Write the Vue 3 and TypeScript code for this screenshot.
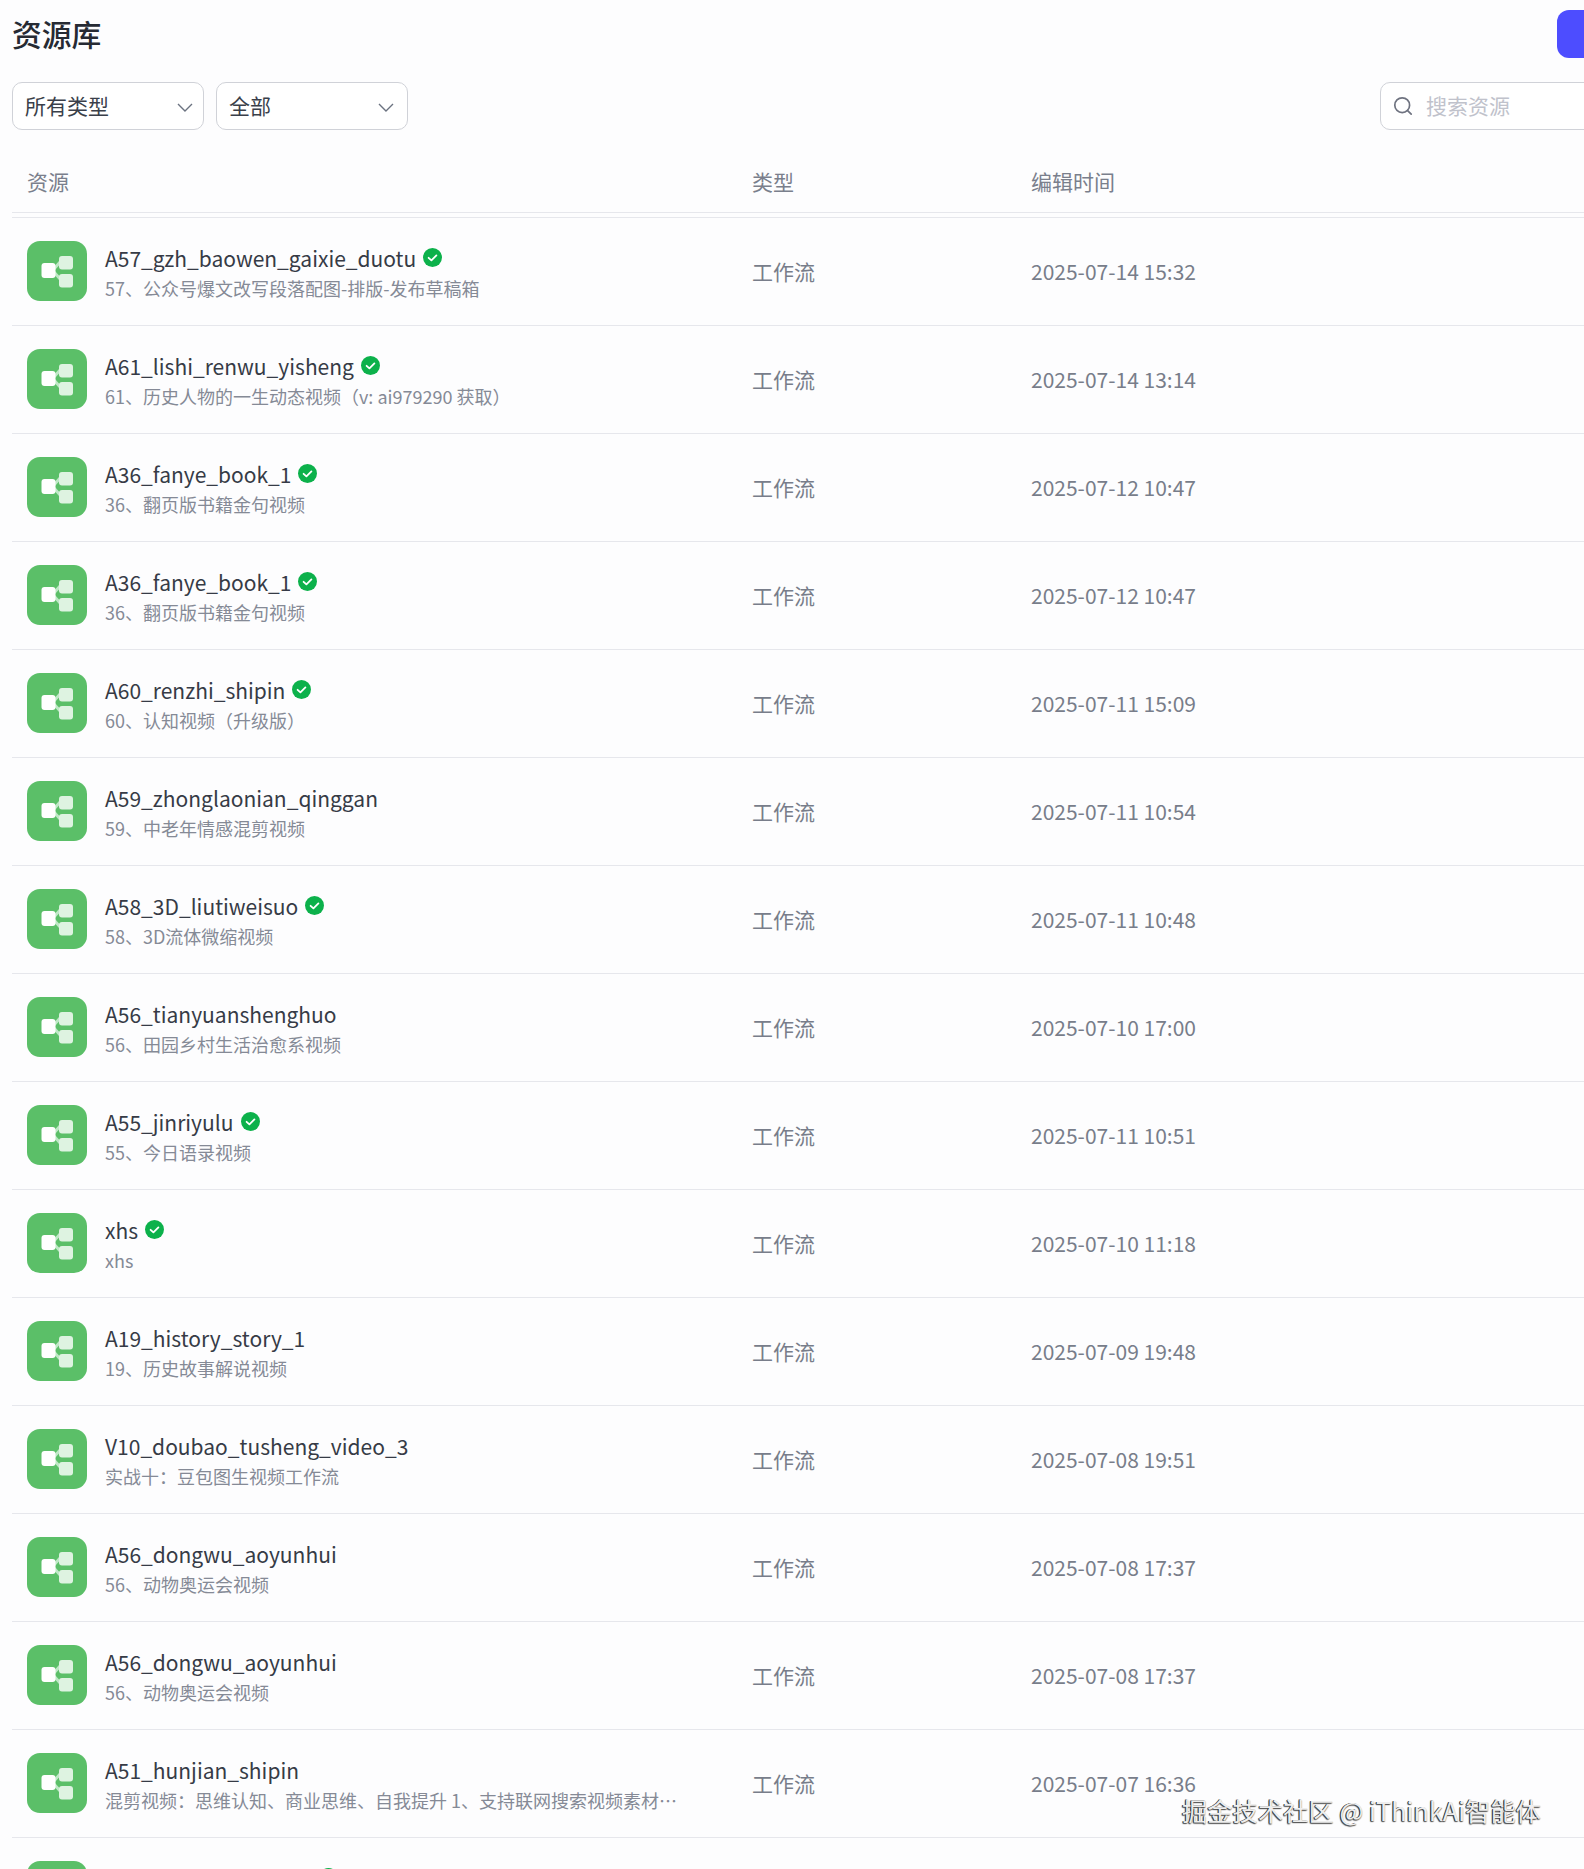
<script setup lang="ts">
interface Resource {
  name: string
  desc: string
  time: string
  verified: boolean
}

const resources: Resource[] = [
  { name: "A57_gzh_baowen_gaixie_duotu", desc: "57、公众号爆文改写段落配图-排版-发布草稿箱", time: "2025-07-14 15:32", verified: true },
  { name: "A61_lishi_renwu_yisheng", desc: "61、历史人物的一生动态视频（v: ai979290 获取）", time: "2025-07-14 13:14", verified: true },
  { name: "A36_fanye_book_1", desc: "36、翻页版书籍金句视频", time: "2025-07-12 10:47", verified: true },
  { name: "A36_fanye_book_1", desc: "36、翻页版书籍金句视频", time: "2025-07-12 10:47", verified: true },
  { name: "A60_renzhi_shipin", desc: "60、认知视频（升级版）", time: "2025-07-11 15:09", verified: true },
  { name: "A59_zhonglaonian_qinggan", desc: "59、中老年情感混剪视频", time: "2025-07-11 10:54", verified: false },
  { name: "A58_3D_liutiweisuo", desc: "58、3D流体微缩视频", time: "2025-07-11 10:48", verified: true },
  { name: "A56_tianyuanshenghuo", desc: "56、田园乡村生活治愈系视频", time: "2025-07-10 17:00", verified: false },
  { name: "A55_jinriyulu", desc: "55、今日语录视频", time: "2025-07-11 10:51", verified: true },
  { name: "xhs", desc: "xhs", time: "2025-07-10 11:18", verified: true },
  { name: "A19_history_story_1", desc: "19、历史故事解说视频", time: "2025-07-09 19:48", verified: false },
  { name: "V10_doubao_tusheng_video_3", desc: "实战十：豆包图生视频工作流", time: "2025-07-08 19:51", verified: false },
  { name: "A56_dongwu_aoyunhui", desc: "56、动物奥运会视频", time: "2025-07-08 17:37", verified: false },
  { name: "A56_dongwu_aoyunhui", desc: "56、动物奥运会视频", time: "2025-07-08 17:37", verified: false },
  { name: "A51_hunjian_shipin", desc: "混剪视频：思维认知、商业思维、自我提升 1、支持联网搜索视频素材并自动生成", time: "2025-07-07 16:36", verified: false },
  { name: "A54_shiwu_jiaoliu_vi", desc: "54、视频", time: "2025-07-07 11:20", verified: true },
]
</script>

<template>
  <div class="page">
    <header class="top">
      <h1>资源库</h1>
      <button class="primary" type="button" aria-label="创建资源"></button>
    </header>

    <div class="filters">
      <div class="select">
        <span>所有类型</span>
        <svg width="16" height="16" viewBox="0 0 16 16" fill="none" stroke="#6b7280" stroke-width="1.4">
          <path d="M1 7l7 7 7-7" />
        </svg>
      </div>
      <div class="select second">
        <span>全部</span>
        <svg width="16" height="16" viewBox="0 0 16 16" fill="none" stroke="#6b7280" stroke-width="1.4">
          <path d="M1 7l7 7 7-7" />
        </svg>
      </div>
      <div class="search">
        <svg width="20" height="20" viewBox="0 0 20 20" fill="none" stroke="#6f7380" stroke-width="1.7">
          <circle cx="9.2" cy="9.2" r="7.4" />
          <path d="M14.6 14.6l3.6 3.6" stroke-linecap="round" />
        </svg>
        <span>搜索资源</span>
      </div>
    </div>

    <div class="table-head grid">
      <span>资源</span>
      <span>类型</span>
      <span>编辑时间</span>
    </div>

    <ul class="list">
      <li v-for="(item, i) in resources" :key="i" class="row grid">
        <div class="res">
          <svg class="res-icon" width="60" height="60" viewBox="0 0 60 60">
            <rect width="60" height="60" rx="13" fill="#5bbf68" />
            <path d="M26 29l8-9M26 30l8 9" stroke="#bfe8c6" stroke-width="3" fill="none" />
            <rect x="32" y="15" width="14" height="13.5" rx="3" fill="#def3e1" />
            <rect x="32" y="33" width="14" height="13.5" rx="3" fill="#def3e1" />
            <rect x="14.5" y="22" width="14" height="15" rx="3" fill="#fff" />
          </svg>
          <div class="res-text">
            <div class="res-name">
              <span>{{ item.name }}</span>
              <svg v-if="item.verified" class="badge" width="19" height="19" viewBox="0 0 19 19">
                <circle cx="9.5" cy="9.5" r="9.5" fill="#0cb14b" />
                <path d="M5.6 9.8l2.8 2.6 5-5" fill="none" stroke="#fff" stroke-width="1.8" stroke-linecap="round" stroke-linejoin="round" />
              </svg>
            </div>
            <div class="res-desc">{{ item.desc }}</div>
          </div>
        </div>
        <span class="cell">工作流</span>
        <span class="cell">{{ item.time }}</span>
      </li>
    </ul>

    <div class="watermark">掘金技术社区 @ iThinkAi智能体</div>
  </div>
</template>

<style>
html,
body {
  margin: 0;
  height: 1869px;
  overflow: hidden;
  background: #fdfdfe;
}
</style>

<style scoped>
.page {
  position: relative;
  box-sizing: border-box;
  width: 1670px;
  height: 1869px;
  overflow: hidden;
  padding: 10px 0 0 12px;
  font-family: "Noto Sans CJK SC", "Noto Sans", sans-serif;
  font-size: 21px;
  color: #1f2329;
}

.top {
  display: flex;
  align-items: center;
  justify-content: space-between;
  height: 48px;
}

h1 {
  margin: 0;
  padding-bottom: 2px;
  font-size: 29.8px;
  font-weight: 500;
  line-height: 46px;
  color: #262a33;
}

.primary {
  width: 113px;
  height: 48px;
  border: 0;
  border-radius: 12px 0 0 12px;
  background: #4d4dff;
}

.filters {
  display: flex;
  gap: 12px;
  margin-top: 24px;
}

.select,
.search {
  box-sizing: border-box;
  display: flex;
  align-items: center;
  height: 48px;
  padding-bottom: 2px;
  border: 1px solid #d0d2d8;
  border-radius: 10px;
  background: #fff;
}

.select {
  justify-content: space-between;
  width: 192px;
  padding-left: 12px;
  padding-right: 10px;
  color: #3a3f4a;
}

.select.second {
  padding-right: 13px;
}

.search {
  width: 290px;
  gap: 13px;
  margin-left: auto;
  padding-left: 12px;
  padding-right: 12px;
  color: #c0c2cb;
}

.search svg {
  margin-top: 2px;
}

.grid {
  display: grid;
  grid-template-columns: 725px 279px 1fr;
  align-items: center;
  padding-left: 15px;
}

.table-head {
  box-sizing: border-box;
  height: 59px;
  margin-top: 24px;
  padding-bottom: 4px;
  border-bottom: 1px solid #e6e7ec;
  color: #7a7f8c;
}

.list {
  margin: 4px 0 0;
  padding: 0;
  list-style: none;
  border-top: 1px solid #e6e7ec;
}

.row {
  box-sizing: border-box;
  height: 108px;
  padding-bottom: 2px;
  border-bottom: 1px solid #e6e7ec;
}

.res {
  display: flex;
  align-items: center;
  gap: 18px;
  min-width: 0;
}

.res-icon {
  flex: none;
}

.res-text {
  min-width: 0;
  padding-top: 3px;
}

.res-name {
  display: flex;
  align-items: center;
  gap: 7px;
  height: 30px;
  line-height: 30px;
  color: #363b46;
}

.badge {
  flex: none;
  margin-top: -1px;
}

.res-desc {
  width: 578px;
  margin-top: 2px;
  overflow: hidden;
  font-size: 18px;
  line-height: 27px;
  color: #858a96;
  white-space: nowrap;
  text-overflow: ellipsis;
}

.cell {
  color: #787d8a;
}

.watermark {
  position: absolute;
  left: 1182px;
  top: 1792px;
  font-size: 25.3px;
  line-height: 36px;
  color: #eeeeee;
  white-space: nowrap;
  text-shadow: -1px 0 0 #333, -1px 1px 1px #555, 0 1px 1px #888;
}
</style>
